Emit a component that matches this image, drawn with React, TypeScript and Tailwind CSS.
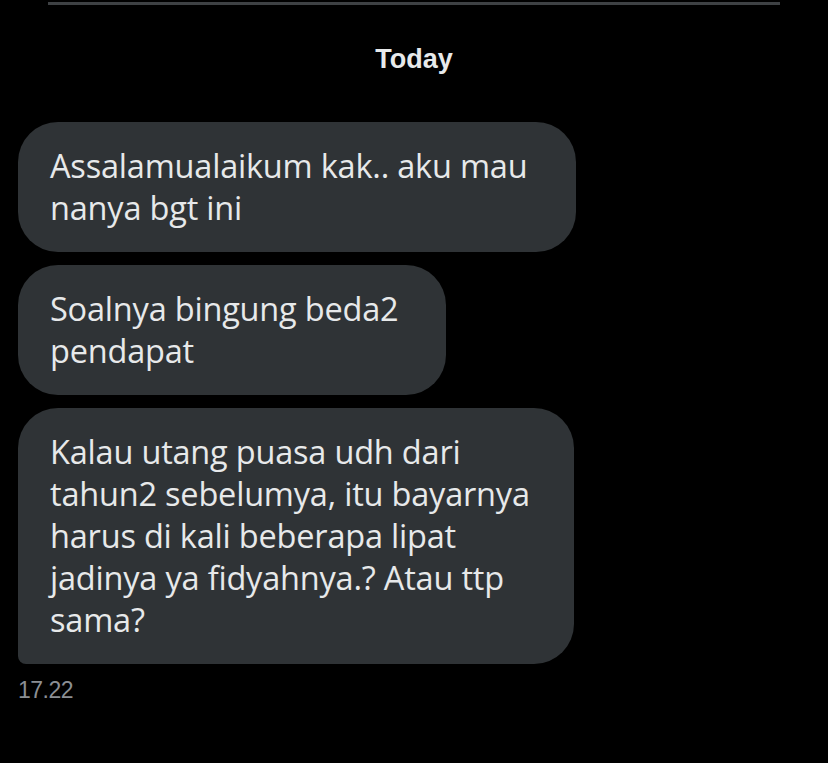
import React from 'react';

const messages = [
  { id: 1, lines: ['Assalamualaikum kak.. aku mau', 'nanya bgt ini'], width: 'w-[558px]' },
  { id: 2, lines: ['Soalnya bingung beda2', 'pendapat'], width: 'w-[428px]' },
  {
    id: 3,
    lines: [
      'Kalau utang puasa udh dari',
      'tahun2 sebelumya, itu bayarnya',
      'harus di kali beberapa lipat',
      'jadinya ya fidyahnya.? Atau ttp',
      'sama?',
    ],
    width: 'w-[556px]',
  },
];

const App: React.FC = () => {
  return (
    <div
      className="w-[828px] h-[763px] bg-black overflow-hidden"
      style={{ fontFamily: '"Open Sans", "Liberation Sans", Arial, sans-serif' }}
    >
      {/* top divider */}
      <div className="ml-[48px] mt-[2px] h-[3px] w-[732px] bg-[#3e4144]" />

      {/* date label */}
      <div className="flex justify-center pt-[37px]">
        <span
          className="text-[27px] font-bold text-[#e7e9ea] leading-[34px]"
          style={{ fontFamily: '"Liberation Sans", Arial, sans-serif' }}
        >
          Today
        </span>
      </div>

      {/* messages */}
      <div className="flex flex-col gap-[13px] pl-[18px] pt-[46px]">
        {messages.map((m, idx) => (
          <div
            key={m.id}
            className={`${m.width} bg-[#2f3336] text-[#e7e9ea] px-[32px] py-[23px] rounded-[40px] ${
              idx === messages.length - 1 ? 'rounded-bl-[8px]' : ''
            }`}
          >
            {m.lines.map((l, i) => (
              <div key={i} className="text-[32.5px] leading-[42px] whitespace-nowrap tracking-[-0.2px]">
                {l}
              </div>
            ))}
          </div>
        ))}
      </div>

      <div
        className="pl-[18px] pt-[12px] text-[23px] leading-[28px] text-[#8b8f94] tracking-[-0.5px]"
        style={{ fontFamily: '"Liberation Sans", Arial, sans-serif' }}
      >
        17.22
      </div>
    </div>
  );
};

export default App;
